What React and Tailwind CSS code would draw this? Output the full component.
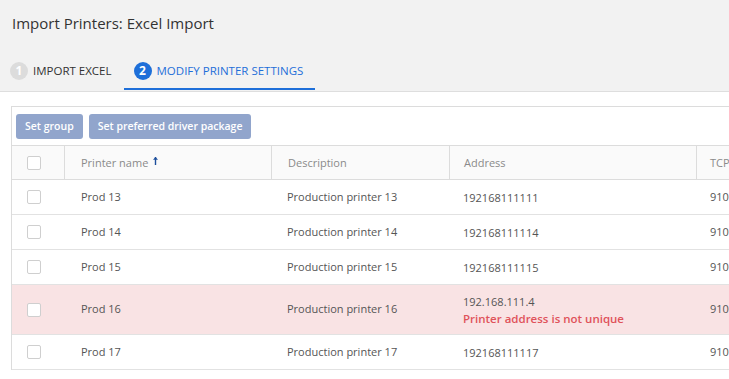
import React from 'react';

const rows = [
  { name: 'Prod 13', desc: 'Production printer 13', addr: '192168111111', tcp: '9100' },
  { name: 'Prod 14', desc: 'Production printer 14', addr: '192168111114', tcp: '9100' },
  { name: 'Prod 15', desc: 'Production printer 15', addr: '192168111115', tcp: '9100' },
  { name: 'Prod 16', desc: 'Production printer 16', addr: '192.168.111.4', tcp: '9100', error: 'Printer address is not unique' },
  { name: 'Prod 17', desc: 'Production printer 17', addr: '192168111117', tcp: '9100' },
];

const cols = 'grid grid-cols-[53px_207px_178px_247px_140px]';

function Checkbox() {
  return <span className="block w-[14px] h-[14px] border border-[#cfcfcf] rounded-[2px] bg-white" />;
}

function Step({ n, label, active }) {
  return (
    <div
      className={`flex items-center gap-[5px] h-[37px] pl-[10px] pr-[12px] ${
        active ? 'border-b-2 border-[#1e6fd9] text-[#1e6fd9]' : 'border-b-2 border-transparent text-[#333]'
      }`}
    >
      <span
        className={`w-[18px] h-[18px] rounded-full flex items-center justify-center text-[12px] font-bold text-white ${
          active ? 'bg-[#1e6fd9]' : 'bg-[#dcdcdc]'
        }`}
      >
        {n}
      </span>
      <span className="text-[11.5px]">{label}</span>
    </div>
  );
}

export default function App() {
  return (
    <div className="w-[729px] h-[379px] overflow-hidden bg-white font-['Open_Sans',sans-serif]">
      {/* Header */}
      <div className="bg-[#f2f2f2] h-[92px] border-b border-[#dedede] flex flex-col">
        <h1 className="pl-[12px] pt-[12px] text-[15px] text-[#333] leading-[22px]">Import Printers: Excel Import</h1>
        <div className="flex mt-[19px]">
          <Step n="1" label="IMPORT EXCEL" />
          <Step n="2" label="MODIFY PRINTER SETTINGS" active />
        </div>
      </div>

      {/* Content */}
      <div className="pl-[11px] pt-[14px]">
        <div className="border-l border-t border-[#dcdcdc] w-[900px]">
          <div className="flex gap-[6px] pl-[4px] pt-[7px] pb-[6px]">
            <button className="h-[25px] px-[9px] rounded-[3px] bg-[#91a5cc] text-white text-[10.5px] font-semibold">
              Set group
            </button>
            <button className="h-[25px] px-[9px] rounded-[3px] bg-[#91a5cc] text-white text-[10.5px] font-semibold">
              Set preferred driver package
            </button>
          </div>

          {/* Table header */}
          <div className={`${cols} h-[35px] bg-[#fafafa] border-t border-b border-[#dcdcdc] text-[11px] text-[#8a8a8a]`}>
            <div className="flex items-center pl-[15px] border-r border-[#dcdcdc]">
              <Checkbox />
            </div>
            <div className="flex items-center pl-[16px] pt-[2px] border-r border-[#dcdcdc] gap-[4px]">
              Printer name
              <svg width="7" height="10" viewBox="0 0 7 10" className="mb-[5px]">
                <path d="M3.5 1 L3.5 9" stroke="#1d4f9c" strokeWidth="1.4" />
                <path d="M1 3.8 L3.5 1 L6 3.8 Z" fill="#1d4f9c" />
              </svg>
            </div>
            <div className="flex items-center pl-[16px] pt-[2px] border-r border-[#dcdcdc]">Description</div>
            <div className="flex items-center pl-[14px] pt-[2px] border-r border-[#dcdcdc]">Address</div>
            <div className="flex items-center pl-[13px] pt-[2px]">TCP/IP port</div>
          </div>

          {rows.map((r) => (
            <div
              key={r.name}
              className={`${cols} border-b border-[#e2e2e2] text-[11px] text-[#555] ${
                r.error ? 'h-[50px] bg-[#f9e3e4]' : 'h-[35px]'
              }`}
            >
              <div className="flex items-center pl-[15px]">
                <Checkbox />
              </div>
              <div className="flex items-center pl-[16px]">{r.name}</div>
              <div className="flex items-center pl-[15px]">{r.desc}</div>
              <div className="flex flex-col justify-center pl-[13px] leading-[17px]">
                <span>{r.addr}</span>
                {r.error && <span className="text-[#e0525a] text-[11.5px] font-semibold">{r.error}</span>}
              </div>
              <div className="flex items-center pl-[13px]">{r.tcp}</div>
            </div>
          ))}
        </div>
      </div>
    </div>
  );
}
